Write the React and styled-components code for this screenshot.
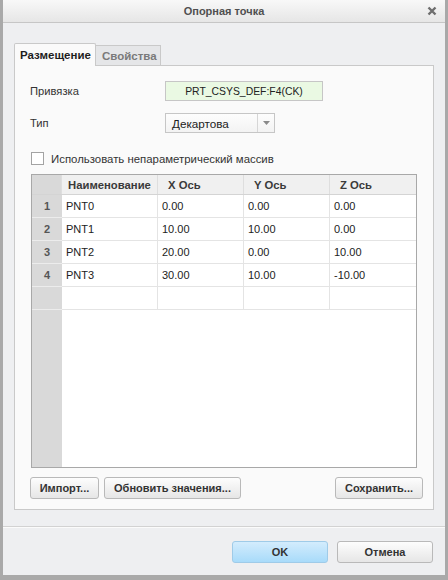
import React from 'react';
import styled, { createGlobalStyle } from 'styled-components';

const Global = createGlobalStyle`
  html, body { margin: 0; padding: 0; }
  body { font-family: "Liberation Sans", Arial, sans-serif; background: #eeeff1; }
  * { box-sizing: border-box; }
`;

const Window = styled.div`
  width: 448px;
  height: 580px;
  display: flex;
  flex-direction: column;
  background: #eeeff1;
  border: 3px solid #a9a9a9;
  border-top: 0;
  border-bottom-width: 5px;
`;

const TitleBar = styled.div`
  height: 23px;
  flex: none;
  display: grid;
  grid-template-columns: 1fr auto 1fr;
  align-items: center;
  background: linear-gradient(#f8f8f8, #e6e6e6);
  border-bottom: 1px solid #c6c6c6;
`;

const Title = styled.div`
  grid-column: 2;
  font-size: 11px;
  font-weight: bold;
  color: #505050;
`;

const Close = styled.div`
  grid-column: 3;
  justify-self: end;
  margin-right: 8px;
  display: flex;
`;

const Content = styled.div`
  padding: 20px 11px 0;
  display: flex;
  flex-direction: column;
`;

const TabBar = styled.div`
  display: flex;
  align-items: flex-end;
  height: 22px;
`;

const Tab = styled.div`
  position: relative;
  z-index: 1;
  display: flex;
  align-items: center;
  font-size: 11.5px;
  font-weight: bold;
  border: 1px solid #c9c9c9;
  border-bottom: 0;
  width: ${p => (p.$active ? '82px' : '65px')};
  padding: 0 ${p => (p.$active ? '5px' : '6px')};
  height: ${p => (p.$active ? '23px' : '20px')};
  margin-bottom: ${p => (p.$active ? '-1px' : '0')};
  background: ${p => (p.$active ? '#fafafa' : '#e5e6e8')};
  color: ${p => (p.$active ? '#1e1e1e' : '#7a7a7a')};
  border-left: ${p => (p.$active ? '1px solid #c9c9c9' : '0')};
  border-radius: ${p => (p.$active ? '2px 2px 0 0' : '0')};
`;

const Panel = styled.div`
  border: 1px solid #c9c9c9;
  background: #fafafa;
  padding: 15px 16px 10px 15px;
  display: flex;
  flex-direction: column;
`;

const FieldRow = styled.div`
  display: grid;
  grid-template-columns: 135px auto;
  align-items: center;
  height: 20px;
  margin-top: ${p => p.$mt || 0}px;
  font-size: 11.2px;
  color: #333;
`;

const LinkField = styled.div`
  width: 158px;
  height: 20px;
  background: #eaf9e3;
  border: 1px solid #c6c6c6;
  display: flex;
  align-items: center;
  justify-content: center;
  font-size: 10.4px;
  color: #222;
`;

const Select = styled.div`
  width: 110px;
  height: 20px;
  border: 1px solid #c6c6c6;
  background: linear-gradient(#fdfdfd, #f3f3f3);
  display: flex;
  align-items: stretch;
  font-size: 11.7px;
  color: #222;
`;

const SelectText = styled.div`
  flex: 1;
  display: flex;
  align-items: center;
  padding-left: 6px;
`;

const SelectArrow = styled.div`
  width: 17px;
  border-left: 1px solid #d6d6d6;
  display: flex;
  align-items: center;
  justify-content: center;
`;

const CheckRow = styled.div`
  display: flex;
  align-items: center;
  gap: 7px;
  height: 13px;
  margin-top: 19px;
  margin-left: 1px;
  font-size: 11.4px;
  color: #333;
`;

const CheckBox = styled.div`
  width: 13px;
  height: 13px;
  border: 1px solid #a3a3a3;
  background: #fff;
`;

const Table = styled.div`
  margin-top: 9px;
  margin-left: 1px;
  width: 386px;
  height: 294px;
  border: 1px solid #a8a8a8;
  background: #fff;
  display: flex;
  flex-direction: column;
`;

const cols = '30px 96px 86px 86px 1fr';

const HeadRow = styled.div`
  display: grid;
  grid-template-columns: ${cols};
  height: 20px;
  background: #f0f0f0;
  border-bottom: 1px solid #d4d4d4;
`;

const HeadCell = styled.div`
  display: flex;
  align-items: center;
  padding-left: ${p => (p.$first ? '6px' : '10px')};
  font-size: 11.3px;
  font-weight: bold;
  color: #3a3a3a;
  border-right: 1px solid #dedede;
  background: ${p => (p.$corner ? '#d9d9d9' : 'transparent')};
  &:last-child { border-right: 0; }
`;

const Row = styled.div`
  display: grid;
  grid-template-columns: ${cols};
  height: 23px;
  border-bottom: 1px solid #e4e4e4;
`;

const RowHead = styled.div`
  background: #d9d9d9;
  border-bottom: 1px solid #ececec;
  margin-bottom: -1px;
  display: flex;
  align-items: center;
  justify-content: center;
  font-size: 11px;
  font-weight: bold;
  color: #555;
`;

const Cell = styled.div`
  display: flex;
  align-items: center;
  padding-left: 4px;
  font-size: 11px;
  color: #222;
  border-right: 1px solid #e4e4e4;
  &:last-child { border-right: 0; }
`;

const Filler = styled.div`
  flex: 1;
  display: grid;
  grid-template-columns: 30px 1fr;
`;

const FillerHead = styled.div`
  background: #d9d9d9;
`;

const ButtonRow = styled.div`
  display: flex;
  gap: 5px;
  margin-top: 9px;
  margin-right: -6px;
`;

const Spacer = styled.div`
  flex: 1;
`;

const Button = styled.button`
  width: ${p => p.$w}px;
  height: 22px;
  padding: 0;
  border: 1px solid ${p => (p.$primary ? '#9fcbe8' : '#b9b9b9')};
  border-radius: 3px;
  background: ${p =>
    p.$primary ? 'linear-gradient(#d3ecfd, #a8dbfa)' : 'linear-gradient(#fdfdfd, #e6e6e6)'};
  font-family: "Liberation Sans", Arial, sans-serif;
  font-size: 11px;
  font-weight: bold;
  color: #333;
`;

const Footer = styled.div`
  margin-top: 16px;
  border-top: 1px solid #d2d2d2;
  box-shadow: inset 0 1px 0 #fbfbfb;
  display: flex;
  justify-content: flex-end;
  gap: 9px;
  padding: 14px 12px 12px;
`;

const data = [
  ['PNT0', '0.00', '0.00', '0.00'],
  ['PNT1', '10.00', '10.00', '0.00'],
  ['PNT2', '20.00', '0.00', '10.00'],
  ['PNT3', '30.00', '10.00', '-10.00'],
];

export default function App() {
  return (
    <>
      <Global />
      <Window>
        <TitleBar>
          <Title>Опорная точка</Title>
          <Close>
            <svg width="10" height="10" viewBox="0 0 10 10">
              <path d="M1.5 1.5 L8.5 8.5 M8.5 1.5 L1.5 8.5" stroke="#6e6e6e" strokeWidth="2.4" />
            </svg>
          </Close>
        </TitleBar>
        <Content>
          <TabBar>
            <Tab $active>Размещение</Tab>
            <Tab>Свойства</Tab>
          </TabBar>
          <Panel>
            <FieldRow>
              <span>Привязка</span>
              <LinkField>PRT_CSYS_DEF:F4(CK)</LinkField>
            </FieldRow>
            <FieldRow $mt={12}>
              <span>Тип</span>
              <Select>
                <SelectText>Декартова</SelectText>
                <SelectArrow>
                  <svg width="7" height="4" viewBox="0 0 7 4">
                    <path d="M0 0 L7 0 L3.5 4 Z" fill="#8a8a8a" />
                  </svg>
                </SelectArrow>
              </Select>
            </FieldRow>
            <CheckRow>
              <CheckBox />
              <span>Использовать непараметрический массив</span>
            </CheckRow>
            <Table>
              <HeadRow>
                <HeadCell $corner />
                <HeadCell $first>Наименование</HeadCell>
                <HeadCell>X Ось</HeadCell>
                <HeadCell>Y Ось</HeadCell>
                <HeadCell>Z Ось</HeadCell>
              </HeadRow>
              {data.map((r, i) => (
                <Row key={i}>
                  <RowHead>{i + 1}</RowHead>
                  {r.map((v, j) => (
                    <Cell key={j}>{v}</Cell>
                  ))}
                </Row>
              ))}
              <Row>
                <RowHead />
                <Cell />
                <Cell />
                <Cell />
                <Cell />
              </Row>
              <Filler>
                <FillerHead />
                <div />
              </Filler>
            </Table>
            <ButtonRow>
              <Button $w={69}>Импорт...</Button>
              <Button $w={137}>Обновить значения...</Button>
              <Spacer />
              <Button $w={88}>Сохранить...</Button>
            </ButtonRow>
          </Panel>
        </Content>
        <Footer>
          <Button $w={96} $primary>OK</Button>
          <Button $w={96}>Отмена</Button>
        </Footer>
      </Window>
    </>
  );
}
